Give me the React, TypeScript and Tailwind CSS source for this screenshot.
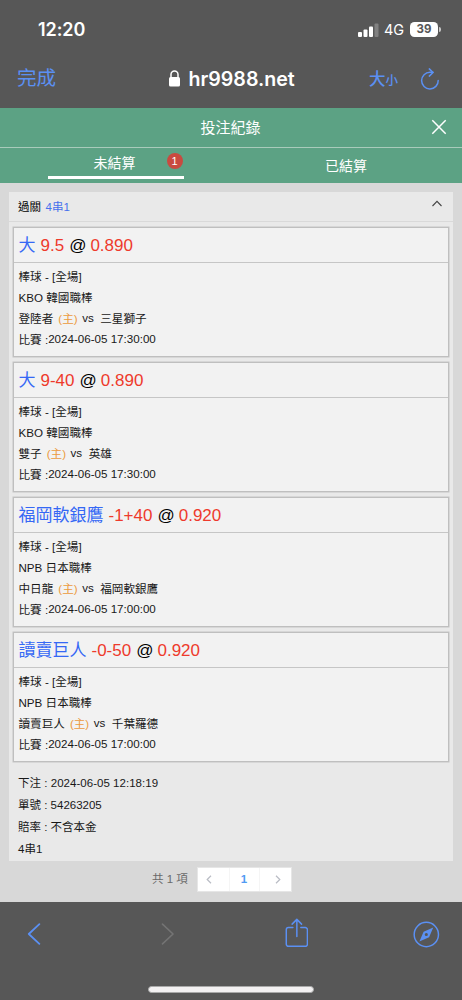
const LATIN = "font-['Liberation_Sans','Noto_Sans_CJK_TC',sans-serif]";
const SYSTEM = "font-['Inter','Noto_Sans_CJK_TC',sans-serif]";

type Bet = {
  pick: string;
  line: string;
  odds: string;
  league: string;
  home: string;
  away: string;
  time: string;
};

const bets: Bet[] = [
  { pick: "大", line: "9.5", odds: "0.890", league: "KBO 韓國職棒", home: "登陸者", away: "三星獅子", time: "2024-06-05 17:30:00" },
  { pick: "大", line: "9-40", odds: "0.890", league: "KBO 韓國職棒", home: "雙子", away: "英雄", time: "2024-06-05 17:30:00" },
  { pick: "福岡軟銀鷹", line: "-1+40", odds: "0.920", league: "NPB 日本職棒", home: "中日龍", away: "福岡軟銀鷹", time: "2024-06-05 17:00:00" },
  { pick: "讀賣巨人", line: "-0-50", odds: "0.920", league: "NPB 日本職棒", home: "讀賣巨人", away: "千葉羅德", time: "2024-06-05 17:00:00" },
];

function StatusBar() {
  return (
    <div className={`flex h-[59px] items-center justify-between pl-[38px] pr-[21px] text-white ${SYSTEM}`}>
      <span className="text-[18px] font-semibold leading-none tracking-[-0.1px]">12:20</span>
      <div className="flex items-center">
        <svg width="21" height="14" viewBox="0 0 21 14" fill="white">
          <rect x="0" y="9" width="4" height="5" rx="1" />
          <rect x="5.5" y="6.5" width="4" height="7.5" rx="1" />
          <rect x="11" y="3.5" width="4" height="10.5" rx="1" />
          <rect x="16.5" y="0.5" width="4" height="13.5" rx="1" opacity="0.25" />
        </svg>
        <span className="ml-[5px] w-[21px] pt-px text-[14.5px] leading-none tracking-[-0.2px]">4G</span>
        <span className="ml-[5px] flex h-[15px] w-[28px] items-center justify-center rounded-[4.5px] bg-white text-[11.5px] font-bold leading-none text-[#575757]">
          39
        </span>
        <span className="ml-px h-[5px] w-[2px] rounded-r-full bg-[#c9c9c9]" />
      </div>
    </div>
  );
}

function AddressBar() {
  return (
    <div className={`grid h-[49px] grid-cols-[168px_1fr_93px] items-center pb-[9px] text-[#5b90f3] ${SYSTEM}`}>
      <span className="pl-[17px] text-[19.5px] leading-none">完成</span>
      <div className="flex items-center text-white">
        <svg className="mb-px" width="13" height="17" viewBox="0 0 13 17">
          <path d="M3 8V4.600a3.500 3.500 0 0 1 7 0V8" fill="none" stroke="white" strokeWidth="1.5" />
          <rect x="1" y="7" width="11" height="9.5" rx="1.6" fill="white" />
        </svg>
        <span className="ml-[7.5px] whitespace-nowrap pt-px text-[19.6px] font-semibold leading-none">hr9988.net</span>
      </div>
      <div className="flex items-center">
        <span className="flex w-[30px] items-baseline whitespace-nowrap font-medium leading-none">
          <span className="text-[16.5px]">大</span>
          <span className="text-[12.5px]">小</span>
        </span>
        <svg className="ml-[21px] mb-px" width="20" height="22" viewBox="0 0 20 22" fill="none" stroke="#5b90f3" strokeWidth="1.5" strokeLinecap="round" strokeLinejoin="round">
          <path d="M13 4.300H10A8.300 8.300 0 1 0 18.200 12.400" />
          <path d="M9.300 0.900 13 4.500 9.300 8.100" />
        </svg>
      </div>
    </div>
  );
}

function RecordHeader() {
  return (
    <div className={`bg-[#5ca284] text-white ${LATIN}`}>
      <div className="grid h-10 grid-cols-[1fr_auto_1fr] items-center border-b border-[#a9cbbb]">
        <span />
        <h1 className="pr-px text-[15px] leading-none">投注紀錄</h1>
        <svg className="mr-[15.5px] mb-px justify-self-end" width="16" height="16" viewBox="0 0 16 16" stroke="white" strokeWidth="1.5">
          <path d="M1.300 1.300 14.700 14.700M14.700 1.300 1.300 14.700" />
        </svg>
      </div>
      <div className="grid h-[35px] grid-cols-2 text-[14px] leading-none">
        <div className="flex justify-center">
          <div className="relative flex h-[30.5px] w-[136px] items-center justify-center border-b-[3px] border-white pt-[3px] pr-[2px]">
            未結算
            <span className="absolute right-px top-[5px] flex size-4 items-center justify-center rounded-full bg-[#c94a40] text-[11px]">1</span>
          </div>
        </div>
        <div className="flex items-center justify-center pr-px">已結算</div>
      </div>
    </div>
  );
}

function BetCard({ bet }: { bet: Bet }) {
  return (
    <article className="h-[130px] border border-[#bfbfbf] bg-[#f2f2f2] shadow-[0_0_0_0.5px_#c6c6c6]">
      <h2 className="flex h-[35px] items-center border-b-[1.5px] border-[#c6c6c6] pl-[4.5px] pt-px text-[17px] leading-none text-[#ee3a2c]">
        <span className="text-[#3568f5]">{bet.pick}</span>
        <span className="ml-[5px]">{bet.line}</span>
        <span className="ml-[5px] text-black">@</span>
        <span className="ml-[4px]">{bet.odds}</span>
      </h2>
      <div className="flex flex-col pl-[4.5px] pt-[3px] text-[11.6px] leading-[21px] text-[#181818]">
        <p className="h-[21px]">棒球 - [全場]</p>
        <p className="h-[21px]">{bet.league}</p>
        <p className="flex h-5">
          <span>{bet.home}</span>
          <span className="ml-[5px] text-[#ec9a3c]">(主)</span>
          <span className="relative -top-px ml-[4.5px]">vs</span>
          <span className="ml-[6.5px]">{bet.away}</span>
        </p>
        <p className="flex h-[22px] pt-px">
          <span className="whitespace-pre">比賽 :</span>
          <span className="relative -top-px">{bet.time}</span>
        </p>
      </div>
    </article>
  );
}

function Pager() {
  return (
    <nav className="flex h-[41px] items-center pb-[4px] pl-[152px] text-[11.5px] leading-none text-[#6a6a6a]">
      <span className="w-[45px] pt-px">共 1 項</span>
      <div className="flex h-[25px] w-[95px] border border-[#e6e6e6] bg-white">
        <span className="flex w-[30.5px] items-center pl-[8px]">
          <svg width="6" height="9" viewBox="0 0 6 9" fill="none" stroke="#b9bcc4" strokeWidth="1.2"><path d="M5 0.800 1.200 4.500 5 8.200" /></svg>
        </span>
        <span className="flex w-[31px] items-center justify-center border-x border-[#f5f5f5] pt-px font-bold text-[#519bf3]">1</span>
        <span className="flex flex-1 items-center justify-end pr-[10px]">
          <svg width="6" height="9" viewBox="0 0 6 9" fill="none" stroke="#b9bcc4" strokeWidth="1.2"><path d="M1 0.800 4.800 4.500 1 8.200" /></svg>
        </span>
      </div>
    </nav>
  );
}

function BottomBar() {
  return (
    <footer className="flex h-[98px] flex-col bg-[#575757]">
      <div className="flex h-[64px] items-center justify-between pl-[27px] pr-[22px]">
        <svg width="14" height="22" viewBox="0 0 14 22" fill="none" stroke="#5b90f3" strokeWidth="1.8" strokeLinecap="round" strokeLinejoin="round"><path d="M12.500 1 1.800 11 12.500 21" /></svg>
        <svg className="ml-[120px]" width="14" height="22" viewBox="0 0 14 22" fill="none" stroke="#747474" strokeWidth="1.6" strokeLinecap="round" strokeLinejoin="round"><path d="M1.500 1 12.200 11 1.500 21" /></svg>
        <svg className="ml-[110px] mb-[2px]" width="24" height="30" viewBox="0 0 24 30" fill="none" stroke="#5b90f3" strokeWidth="1.5" strokeLinecap="round" strokeLinejoin="round">
          <path d="M8 9.500H3.500a2.200 2.200 0 0 0-2.200 2.200v14.600a2.200 2.200 0 0 0 2.200 2.200h17a2.200 2.200 0 0 0 2.200-2.200V11.700a2.200 2.200 0 0 0-2.200-2.200H16" />
          <path d="M12 18.500V1.500M7.200 6 12 1.200 16.800 6" />
        </svg>
        <svg className="ml-[105px]" width="27" height="27" viewBox="0 0 27 27">
          <circle cx="13.500" cy="13.500" r="12.300" fill="none" stroke="#5b90f3" strokeWidth="1.500" />
          <path fill="#5b90f3" fillRule="evenodd" d="M20.500 6.500 10.700 10.700 6.500 20.500 16.300 16.300ZM13.500 11.900a1.600 1.600 0 1 1 0 3.200 1.600 1.600 0 0 1 0-3.200Z" />
        </svg>
      </div>
      <div className="mx-auto mt-[20px] h-[7px] w-[166px] rounded-full border border-[#a9a9a9] bg-[#f3f1f2]" />
    </footer>
  );
}

export default function App() {
  return (
    <div className="flex h-[1000px] w-[462px] flex-col overflow-hidden bg-[#d8d8d8]">
      <header className="h-[108px] bg-[#575757]">
        <StatusBar />
        <AddressBar />
      </header>
      <RecordHeader />
      <main className={`flex h-[719px] flex-col ${LATIN}`}>
        <section className="mx-[9px] mt-[9px] h-[669px] bg-[#e9e9e9]">
          <div className="flex h-[30px] items-center border-b border-[#d9d9d9] pl-[9px] pr-[11px] text-[11.5px] leading-none">
            <span className="pt-[2px]">過關</span>
            <span className="ml-[4.5px] pt-[2px] text-[#4671ed]">4串1</span>
            <svg className="ml-auto mb-[6px]" width="10" height="7" viewBox="0 0 10 7" fill="none" stroke="#444444" strokeWidth="1.1"><path d="M0.500 6 5 1.300 9.500 6" /></svg>
          </div>
          <div className="flex flex-col gap-[5px] px-1 pt-[5px]">
            {bets.map((bet) => (
              <BetCard key={bet.pick + bet.line} bet={bet} />
            ))}
          </div>
          <div className="pl-[9px] pt-[10px] text-[11.5px] leading-[22px] text-[#181818]">
            <p className="h-[22px] tracking-[0.03px]">下注 : 2024-06-05 12:18:19</p>
            <p className="h-[22px]">單號 : 54263205</p>
            <p className="h-[22px]">賠率 : 不含本金</p>
            <p className="h-[22px]">4串1</p>
          </div>
        </section>
        <Pager />
      </main>
      <BottomBar />
    </div>
  );
}
